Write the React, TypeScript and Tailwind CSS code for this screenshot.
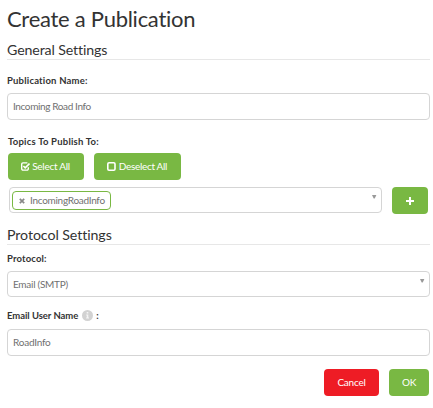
import type { ReactNode } from "react";

function SectionTitle({ children, className = "leading-[21px] tracking-[-0.13px]" }: { children: ReactNode; className?: string }) {
  return (
    <h2 className={`h-[21px] whitespace-nowrap border-b border-[#e7e7e7] text-[14.2px] text-[#333] ${className}`}>
      {children}
    </h2>
  );
}

function Label({ children, className = "text-[9.5px] tracking-[0.2px]" }: { children: ReactNode; className?: string }) {
  return (
    <div className={`flex h-3 items-center whitespace-nowrap font-bold leading-3 text-[#333] ${className}`}>
      {children}
    </div>
  );
}

function Caret() {
  return (
    <svg width="5" height="4" viewBox="0 0 5 4" className="-mr-px ml-auto mt-[7px] shrink-0 self-start">
      <path d="M0 0h4.4L2.7 3.6h-1z" fill="#999" />
    </svg>
  );
}

function BoxIcon({ checked = false }: { checked?: boolean }) {
  return (
    <svg width="9" height="9" viewBox="0 0 9 9" fill="none" stroke="currentColor" strokeWidth="1.4" className="shrink-0">
      {checked ? (
        <>
          <path d="M7.3 5.3v1.5a1.3 1.3 0 0 1-1.3 1.3H2A1.3 1.3 0 0 1 .7 6.8V2.2A1.3 1.3 0 0 1 2 .9h4.4" />
          <path d="M2.4 4l1.8 1.8L8.5 1.5" strokeWidth="1.6" />
        </>
      ) : (
        <rect x="0.8" y="0.8" width="7.2" height="7.4" rx="1.2" strokeWidth="1.6" />
      )}
    </svg>
  );
}

const field =
  "flex items-center rounded-[4px] border border-[#d5d5d5] bg-white text-[10px] text-[#707070] whitespace-nowrap";
const button =
  "flex h-[27px] items-center justify-center whitespace-nowrap rounded-[4px] text-[10px] text-white";
const green = "bg-[#79b843]";

export default function App() {
  return (
    <main className="h-[408px] w-[433px] overflow-hidden bg-white pl-[7px] pr-[3px] pt-[6px] font-['Lato',sans-serif] [font-variant-ligatures:none]">
      <h1 className="h-[33px] whitespace-nowrap text-[22px] leading-[26px] tracking-[-0.27px] text-[#333]">Create a Publication</h1>
      <SectionTitle>General Settings</SectionTitle>

      <div className="mt-[15px]">
        <Label>Publication Name:</Label>
      </div>
      <div className={`${field} mt-[6px] h-[27px] px-[5px] tracking-[-0.38px]`}>Incoming Road Info</div>

      <div className="ml-px mt-[16px]">
        <Label className="text-[9.5px] tracking-[0.22px]">Topics To Publish To:</Label>
        <div className="mt-[5px] flex gap-[10px]">
          <button className={`${button} ${green} w-[76px] gap-[2px] pr-px tracking-[-0.27px]`}>
            <BoxIcon checked />
            Select All
          </button>
          <button className={`${button} ${green} w-[87px] gap-[3px] pr-px tracking-[-0.32px]`}>
            <BoxIcon />
            Deselect All
          </button>
        </div>
      </div>
      <div className="ml-[2px] mt-[7px] flex gap-[10px]">
        <div className={`${field} h-[26px] w-[373px] pl-[2px] pr-[5px]`}>
          <span className="flex h-[19px] w-[99px] items-center rounded-[4px] border border-[#79b843] pl-[6px]">
            <svg width="6" height="6" viewBox="0 0 6 6" stroke="#888" strokeWidth="1.7" className="mt-px">
              <path d="M.8.8l4.4 4.4M5.2.8L.8 5.2" />
            </svg>
            <span className="ml-[5px] tracking-[-0.28px]">IncomingRoadInfo</span>
          </span>
          <Caret />
        </div>
        <button className={`${button} ${green} h-[26px] w-[36px]`}>
          <svg width="8" height="8" viewBox="0 0 8 8" stroke="currentColor" strokeWidth="2">
            <path d="M4 0v8M0 4h8" />
          </svg>
        </button>
      </div>

      <div className="mt-[10px]">
        <SectionTitle className="leading-[22px] tracking-[-0.08px]">Protocol Settings</SectionTitle>
      </div>
      <div className="mt-[8px]">
        <Label className="text-[9.5px] tracking-[0.15px]">Protocol:</Label>
      </div>
      <div className={`${field} mt-[6px] h-[26px] px-[5px] tracking-[-0.27px]`}>
        Email (SMTP)
        <Caret />
      </div>

      <div className="mt-[13px]">
        <Label className="text-[9.5px] tracking-[-0.05px]">
          Email User Name
          <svg width="11" height="11" viewBox="0 0 11 11" className="-mt-px ml-[4px] mr-[3px]">
            <circle cx="5.5" cy="5.5" r="5.5" fill="#d2d2d2" />
            <path d="M4.7 2h1.6v1.4H4.7zM4.2 4.6h2.1v3h.7v1H4.1v-1h.7v-2h-.6z" fill="#f4f4f4" />
          </svg>
          :
        </Label>
      </div>
      <div className={`${field} mt-[7px] h-[27px] px-[5px] tracking-[-0.23px]`}>RoadInfo</div>

      <div className="mr-px mt-[13px] flex justify-end gap-[10px]">
        <button className={`${button} w-[55px] bg-[#ee1c25] tracking-[-0.22px]`}>Cancel</button>
        <button className={`${button} ${green} w-[40px] tracking-[-0.2px]`}>OK</button>
      </div>
    </main>
  );
}
